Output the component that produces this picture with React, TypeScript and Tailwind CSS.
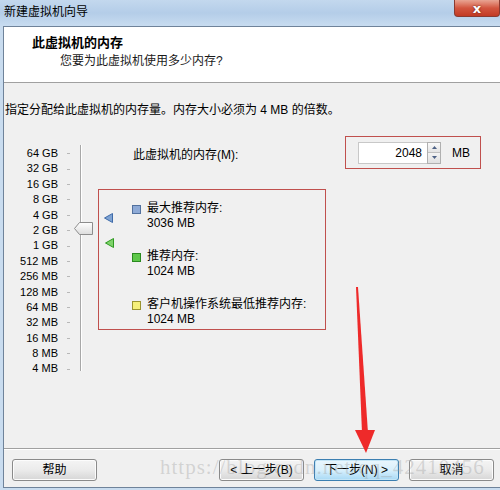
import React from "react";

const font = { fontFamily: '"Liberation Sans", "Noto Sans CJK SC", sans-serif' };

const scale = ["64 GB", "32 GB", "16 GB", "8 GB", "4 GB", "2 GB", "1 GB", "512 MB", "256 MB", "128 MB", "64 MB", "32 MB", "16 MB", "8 MB", "4 MB"];

function WinButton({ label, primary }: { label: string; primary?: boolean }) {
  return (
    <button
      className={`w-[85px] h-[22px] rounded-[3px] border text-[12px] text-black flex items-center justify-center ${
        primary
          ? "border-[#3c7fb1] bg-gradient-to-b from-[#eaf6fd] via-[#d9f0fc] to-[#a7d9f5] shadow-[inset_0_0_0_1px_#c4e5f6]"
          : "border-[#8a8a8a] bg-gradient-to-b from-[#f4f4f4] via-[#ebebeb] to-[#d6d6d6] shadow-[inset_0_0_0_1px_#fcfcfc]"
      }`}
    >
      {label}
    </button>
  );
}

function LegendItem({ color, border, title, value }: { color: string; border: string; title: string; value: string }) {
  return (
    <div className="flex">
      <div className="w-[15px] pt-[4px]">
        <div className={`w-[9px] h-[9px] border ${color} ${border}`} />
      </div>
      <div className="text-[12px] leading-[15px] text-black">
        <div>{title}</div>
        <div>{value}</div>
      </div>
    </div>
  );
}

export default function App() {
  return (
    <div style={font} className="w-[500px] h-[490px] flex flex-col bg-[#c9dcef] overflow-hidden relative">
      {/* title bar */}
      <div className="h-[26px] flex bg-gradient-to-b from-[#c3d8ee] via-[#b4cde8] to-[#c8dcf0]">
        <div className="pl-[4px] pt-[4px] text-[12px] leading-[16px] text-black">新建虚拟机向导</div>
        <div className="ml-auto w-[46px] h-[17px] rounded-b-[4px] border border-t-0 border-[#8a3a30] bg-gradient-to-b from-[#e8a493] via-[#d2553f] to-[#c23a24] flex items-center justify-center">
          <span className="text-white font-bold text-[13px] leading-[13px] [text-shadow:0_0_2px_#5a1a10]" style={{ fontFamily: '"DejaVu Sans", sans-serif' }}>x</span>
        </div>
      </div>

      <div className="flex-1 flex pl-[3px]">
        <div className="flex-1 flex flex-col border-t border-l border-b border-[#6f839a] mb-[2px]">
          {/* header */}
          <div className="h-[56px] bg-white border-b border-[#a0a0a0] pl-[28px] pt-[8px]">
            <div className="text-[13px] leading-[16px] font-bold text-black">此虚拟机的内存</div>
            <div className="text-[12px] leading-[16px] text-[#1a1a1a] pl-[28px] mt-[2px]">您要为此虚拟机使用多少内存?</div>
          </div>

          {/* body */}
          <div className="flex-1 bg-[#f0f0f0] flex flex-col relative">
            <div className="pt-[19px] pl-[1px] text-[12px] leading-[16px] text-black">
              指定分配给此虚拟机的内存量。内存大小必须为 4 MB 的倍数。
            </div>

            <div className="flex-1 mt-[18px] flex relative">
              {/* slider */}
              <div className="w-[94px] relative flex">
                <div className="w-[54px] pt-[10px] flex flex-col items-end">
                  {scale.map((s) => (
                    <div key={s} className="h-[15.4px] text-[11px] leading-[15.4px] text-black whitespace-nowrap">{s}</div>
                  ))}
                </div>
                <div className="w-[12px] pt-[10px] flex flex-col items-end">
                  {scale.map((s) => (
                    <div key={s} className="h-[15.4px] flex items-center">
                      <div className="w-[3px] h-px bg-[#b8b8b8]" />
                    </div>
                  ))}
                </div>
                <div className="ml-[10px] mt-[9px] h-[226px] flex">
                  <div className="w-px bg-[#a8a8a8]" />
                  <div className="w-px bg-white" />
                </div>
                {/* thumb */}
                <svg className="absolute left-[70px] top-[86px]" width="19" height="13" viewBox="0 0 19 13">
                  <defs>
                    <linearGradient id="th" x1="0" y1="0" x2="0" y2="1">
                      <stop offset="0" stopColor="#ffffff" />
                      <stop offset="1" stopColor="#dcdcdc" />
                    </linearGradient>
                  </defs>
                  <polygon points="0.5,6.5 5.5,0.5 18.5,0.5 18.5,12.5 5.5,12.5" fill="url(#th)" stroke="#8c8c8c" />
                </svg>
              </div>

              {/* markers */}
              <svg className="absolute left-[100px] top-[77px]" width="9" height="10" viewBox="0 0 9 10">
                <polygon points="0.5,5 8.5,0.5 8.5,9.5" fill="#7fa3d2" stroke="#3e6aa8" />
              </svg>
              <svg className="absolute left-[101px] top-[102px]" width="9" height="10" viewBox="0 0 9 10">
                <polygon points="0.5,5 8.5,0.5 8.5,9.5" fill="#7fd36b" stroke="#2f9a22" />
              </svg>

              {/* right side */}
              <div className="flex-1 flex flex-col">
                <div className="h-[33px] flex items-center pl-[35px]">
                  <div className="w-[212px] text-[12px] text-black pt-[4px]">此虚拟机的内存(M):</div>
                  <div className="w-[136px] h-[33px] border border-[#c0504d] flex items-center pl-[12px]">
                    <div className="w-[69px] h-[22px] bg-white border border-[#c8c8c8] border-r-0 flex items-center justify-end pr-[5px] text-[12px] text-black">2048</div>
                    <div className="w-[14px] h-[22px] flex flex-col border border-[#b0b0b0]">
                      <div className="flex-1 bg-gradient-to-b from-[#fafafa] to-[#e4e4e4] flex items-center justify-center border-b border-[#c0c0c0]">
                        <svg width="5" height="3" viewBox="0 0 5 3"><polygon points="0,3 2.5,0 5,3" fill="#4d6185" /></svg>
                      </div>
                      <div className="flex-1 bg-gradient-to-b from-[#f4f4f4] to-[#e0e0e0] flex items-center justify-center">
                        <svg width="5" height="3" viewBox="0 0 5 3"><polygon points="0,0 2.5,3 5,0" fill="#4d6185" /></svg>
                      </div>
                    </div>
                    <div className="ml-[11px] text-[12px] text-black">MB</div>
                  </div>
                </div>

                <div className="mt-[20px] w-[228px] h-[141px] border border-[#c0504d] pl-[33px] pt-[11px] flex flex-col gap-[18px]">
                  <LegendItem color="bg-[#8eaad6]" border="border-[#52719e]" title="最大推荐内存:" value="3036 MB" />
                  <LegendItem color="bg-[#5ec84a]" border="border-[#2a8a1f]" title="推荐内存:" value="1024 MB" />
                  <LegendItem color="bg-[#f5f07a]" border="border-[#9a9430]" title="客户机操作系统最低推荐内存:" value="1024 MB" />
                </div>
              </div>
            </div>

            {/* separator */}
            <div className="h-[2px] flex flex-col">
              <div className="h-px bg-[#a0a0a0]" />
              <div className="h-px bg-white" />
            </div>

            {/* buttons */}
            <div className="pt-[9px] pb-[6px] flex items-center pl-[8px] pr-[6px]">
              <WinButton label="帮助" />
              <div className="ml-auto flex gap-[10px]">
                <WinButton label="< 上一步(B)" />
                <WinButton label="下一步(N) >" primary />
                <WinButton label="取消" />
              </div>
            </div>

            {/* watermark */}
            <div
              className="absolute left-[156px] bottom-[8px] text-[21px] leading-[24px] tracking-[1px] text-[#9a9a9a]/35 pointer-events-none whitespace-nowrap"
              style={{ fontFamily: '"Liberation Serif", serif' }}
            >
              https://blog.csdn.net/qq_42410456
            </div>
          </div>
        </div>
      </div>

      {/* red arrow annotation */}
      <svg className="absolute left-0 top-0 pointer-events-none" width="500" height="490" viewBox="0 0 500 490">
        <polygon points="356,287 358,287 368,433 362,433" fill="#ee2a2a" />
        <polygon points="355,430 375,430 366,453" fill="#ee2a2a" />
      </svg>
    </div>
  );
}
